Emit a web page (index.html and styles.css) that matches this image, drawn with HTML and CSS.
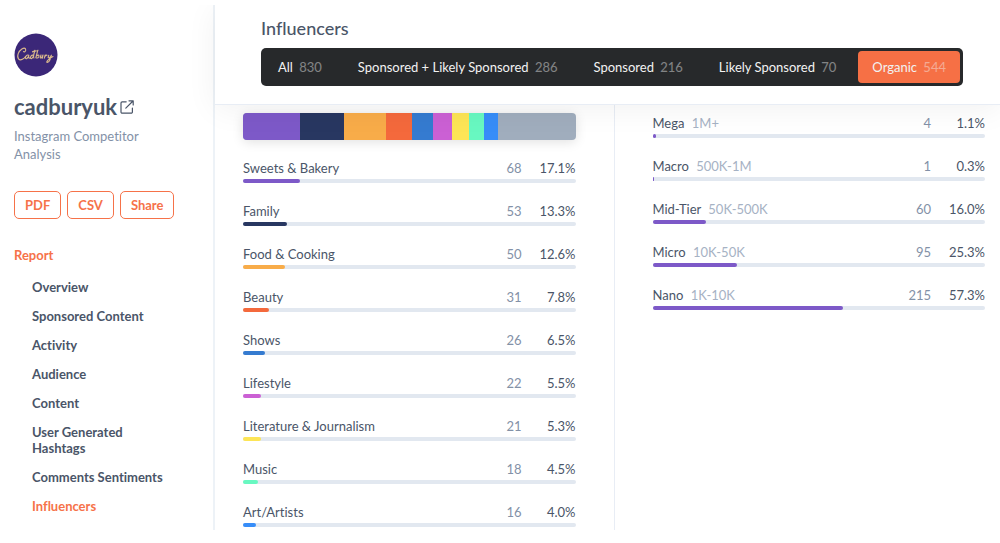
FILE: index.html
```html
<!DOCTYPE html>
<html lang="en">
<head>
<meta charset="utf-8">
<meta name="viewport" content="width=device-width, initial-scale=1">
<title>cadburyuk – Influencers</title>
<link rel="stylesheet" href="styles.css">
</head>
<body>
<div class="app">
  <aside class="sidebar">
    <svg class="avatar" viewBox="0 0 44 44" role="img" aria-label="Cadbury">
      <circle cx="22" cy="22" r="21.5" fill="#3b2778"/>
      <g fill="none" stroke="#d9b88c" stroke-width="1.1" stroke-linecap="round" stroke-linejoin="round">
        <path d="M9.500 18.500c.8 1.200 3-.8 2-2.600-1.300-2-6 .8-7.300 4.800-1.600 4.700 1 7.300 4.200 5.600 1.400-.7 2.400-1.600 3.200-2.800"/>
        <path d="M14.800 22.200c-2-1-3.800 1.500-3.300 3 .6 1.400 2.700-.4 3.300-2.600-.4 1.700-.3 3.300 1.500 2.200"/>
        <path d="M19.500 22.300c-2-.9-3.400 1.500-2.900 2.900.7 1.400 2.500-.6 3-2.600l1.300-5.400c-.8 3-2 6.500-1 7.800"/>
        <path d="M18.500 18.800c1.500-1.200 3.500-.2 5.500-1.400M23.800 17.400l-2 7.300c1.700 1 3.300-.4 3.200-1.800-.1-1-1.400-1-2.300 0"/>
        <path d="M27 22l-.8 2.700c.7 1.100 2-.6 2.800-2.700l-.6 3.200"/>
        <path d="M31.200 22l-.9 3.200c.3-1.600 1.500-3.200 2.800-3"/>
        <path d="M34.800 22.200l-.7 2.200c.7 1.200 2.400-.5 3.300-2.200-.6 3-2 7-4 7.200-1.900 0 .8-3.200 5.600-5.800"/>
      </g>
    </svg>
    <h1 class="account">
      <a class="account-link" href="#profile">cadburyuk
        <svg class="external" viewBox="0 0 14 14" aria-hidden="true" fill="none" stroke="currentColor" stroke-width="1.200" stroke-linecap="round" stroke-linejoin="round">
          <path d="M6.200 1.800H2.200a1.200 1.200 0 0 0-1.200 1.200v9a1.200 1.200 0 0 0 1.200 1.200h9a1.200 1.200 0 0 0 1.200-1.200V8M9 .8h4.200V5M13 1L5.800 8.200"/>
        </svg>
      </a>
    </h1>
    <p class="subtitle">Instagram Competitor Analysis</p>
    <div class="actions">
      <button class="action" type="button">PDF</button>
      <button class="action" type="button">CSV</button>
      <button class="action" type="button">Share</button>
    </div>
    <nav class="nav" aria-label="Report">
      <a class="nav-title" href="#report">Report</a>
      <ul class="nav-list">
        <li><a href="#overview">Overview</a></li>
        <li><a href="#sponsored">Sponsored Content</a></li>
        <li><a href="#activity">Activity</a></li>
        <li><a href="#audience">Audience</a></li>
        <li><a href="#content">Content</a></li>
        <li><a href="#hashtags">User Generated Hashtags</a></li>
        <li><a href="#sentiments">Comments Sentiments</a></li>
        <li><a class="current" href="#influencers">Influencers</a></li>
      </ul>
    </nav>
  </aside>

  <main class="main">
    <header class="header">
      <h2 class="title">Influencers</h2>
      <div class="tabs">
        <button class="tab" type="button">All <span class="tab-count">830</span></button>
        <button class="tab" type="button">Sponsored + Likely Sponsored <span class="tab-count">286</span></button>
        <button class="tab" type="button">Sponsored <span class="tab-count">216</span></button>
        <button class="tab" type="button">Likely Sponsored <span class="tab-count">70</span></button>
        <button class="tab active" type="button" aria-pressed="true">Organic <span class="tab-count">544</span></button>
      </div>
    </header>

    <div class="panels">
      <section class="panel" aria-label="Categories">
        <div class="stack">
          <span class="purple" style="width:17.1%"></span>
          <span class="navy" style="width:13.3%"></span>
          <span class="amber" style="width:12.6%"></span>
          <span class="orange" style="width:7.8%"></span>
          <span class="blue" style="width:6.5%"></span>
          <span class="pink" style="width:5.5%"></span>
          <span class="yellow" style="width:5.3%"></span>
          <span class="mint" style="width:4.5%"></span>
          <span class="sky" style="width:4%"></span>
        </div>
        <ul class="rows">
          <li class="row"><span class="name">Sweets &amp; Bakery</span><span class="count">68</span><span class="share">17.1%</span><div class="track"><div class="fill purple" style="width:17.1%"></div></div></li>
          <li class="row"><span class="name">Family</span><span class="count">53</span><span class="share">13.3%</span><div class="track"><div class="fill navy" style="width:13.3%"></div></div></li>
          <li class="row"><span class="name">Food &amp; Cooking</span><span class="count">50</span><span class="share">12.6%</span><div class="track"><div class="fill amber" style="width:12.6%"></div></div></li>
          <li class="row"><span class="name">Beauty</span><span class="count">31</span><span class="share">7.8%</span><div class="track"><div class="fill orange" style="width:7.8%"></div></div></li>
          <li class="row"><span class="name">Shows</span><span class="count">26</span><span class="share">6.5%</span><div class="track"><div class="fill blue" style="width:6.5%"></div></div></li>
          <li class="row"><span class="name">Lifestyle</span><span class="count">22</span><span class="share">5.5%</span><div class="track"><div class="fill pink" style="width:5.5%"></div></div></li>
          <li class="row"><span class="name">Literature &amp; Journalism</span><span class="count">21</span><span class="share">5.3%</span><div class="track"><div class="fill yellow" style="width:5.3%"></div></div></li>
          <li class="row"><span class="name">Music</span><span class="count">18</span><span class="share">4.5%</span><div class="track"><div class="fill mint" style="width:4.5%"></div></div></li>
          <li class="row"><span class="name">Art/Artists</span><span class="count">16</span><span class="share">4.0%</span><div class="track"><div class="fill sky" style="width:4%"></div></div></li>
        </ul>
      </section>

      <section class="panel" aria-label="Audience size">
        <ul class="rows">
          <li class="row"><span class="name">Mega <span class="range">1M+</span></span><span class="count">4</span><span class="share">1.1%</span><div class="track"><div class="fill purple" style="width:1.1%"></div></div></li>
          <li class="row"><span class="name">Macro <span class="range">500K-1M</span></span><span class="count">1</span><span class="share">0.3%</span><div class="track"><div class="fill purple" style="width:0.3%"></div></div></li>
          <li class="row"><span class="name">Mid-Tier <span class="range">50K-500K</span></span><span class="count">60</span><span class="share">16.0%</span><div class="track"><div class="fill purple" style="width:16%"></div></div></li>
          <li class="row"><span class="name">Micro <span class="range">10K-50K</span></span><span class="count">95</span><span class="share">25.3%</span><div class="track"><div class="fill purple" style="width:25.3%"></div></div></li>
          <li class="row"><span class="name">Nano <span class="range">1K-10K</span></span><span class="count">215</span><span class="share">57.3%</span><div class="track"><div class="fill purple" style="width:57.3%"></div></div></li>
        </ul>
      </section>
    </div>
  </main>
</div>
</body>
</html>
```
FILE: styles.css
```css
* {
  box-sizing: border-box;
}

body {
  margin: 0;
  padding: 5px 0 13px;
  background: #fff;
  color: #4a5568;
  font: 13px/20px Lato, "Open Sans", sans-serif;
  font-variant-ligatures: none;
}

ul {
  margin: 0;
  padding: 0;
  list-style: none;
}

a {
  color: inherit;
  text-decoration: none;
}

button {
  font: inherit;
  cursor: pointer;
}

.app {
  display: flex;
  min-height: calc(100vh - 18px);
}

/* Sidebar */
.sidebar {
  flex: none;
  width: 215px;
  padding: 28px 15px 0 14px;
  border-right: 2px solid #edf2f7;
}

.avatar {
  display: block;
  width: 44px;
  height: 44px;
}

.account {
  margin: 16px 0 0;
  font-size: 22px;
  line-height: 28px;
}

.account-link {
  display: flex;
  align-items: center;
  gap: 3px;
}

.external {
  width: 14px;
  height: 14px;
}

.subtitle {
  max-width: 150px;
  margin: 6px 0 0;
  color: #8391a7;
  line-height: 18px;
}

.actions {
  display: flex;
  gap: 6px;
  margin-top: 28px;
}

.action {
  height: 28px;
  padding: 0 10px;
  border: 1px solid #f67249;
  border-radius: 5px;
  background: #fff;
  color: #f67249;
  font-weight: 700;
}

.nav {
  margin-top: 26px;
  font-weight: 700;
}

.nav-title {
  display: block;
  color: #f67249;
}

.nav-list {
  display: grid;
  gap: 13px;
  margin-top: 14px;
  padding: 0 10px 0 18px;
  line-height: 16px;
}

.nav-list a {
  display: block;
}

.nav-list li {
  max-width: 132px;
}

.nav-list .current {
  color: #f67249;
}

/* Header */
.main {
  flex: 1;
  min-width: 0;
}

.header {
  padding: 10px 37px 18px 46px;
  border-bottom: 1px solid #e8edf5;
  box-shadow: 0 4px 30px rgba(0, 0, 0, 0.06);
  clip-path: inset(0 -40px -40px -40px);
}

.title {
  margin: 0;
  font-size: 18px;
  font-weight: 500;
  line-height: 26px;
}

.tabs {
  display: flex;
  justify-content: space-between;
  margin-top: 7px;
  padding: 3px;
  border-radius: 5px;
  background: #27292b;
}

.tab {
  height: 32px;
  padding: 0 14px;
  border: 0;
  border-radius: 4px;
  background: none;
  color: #f2f2f2;
  white-space: nowrap;
}

.tab-count {
  margin-left: 3px;
  opacity: 0.45;
}

.tab.active {
  background: #f67045;
}

/* Panels */
.panels {
  display: flex;
  padding: 0 15px 0 28px;
}

.panel {
  flex: 1 1 0;
  box-sizing: content-box;
  min-height: 417px;
  padding-top: 8px;
}

.panel:first-child {
  padding-right: 38px;
}

.panel:last-child {
  padding-left: 38px;
  border-left: 1px solid #e8edf5;
}

.stack {
  display: flex;
  height: 27px;
  margin-bottom: 18px;
  border-radius: 4px;
  overflow: hidden;
  background: #a0adbd;
  box-shadow: 0 2px 12px rgba(0, 0, 0, 0.12);
}

.rows {
  display: grid;
  gap: 18px;
}

.row {
  display: grid;
  grid-template-columns: 1fr auto 54px;
  row-gap: 1px;
}

.count {
  color: #8391a7;
}

.share {
  text-align: right;
}

.range {
  margin-left: 4px;
  color: #a6b2c4;
}

.track {
  grid-column: 1 / -1;
  height: 4px;
  border-radius: 2px;
  background: #e2e8f0;
}

.fill {
  height: 100%;
  border-radius: 2px;
}

.purple { background: #7d59c8; }
.navy { background: #283761; }
.amber { background: #f8ac49; }
.orange { background: #f4693c; }
.blue { background: #357bd0; }
.pink { background: #cb60d4; }
.yellow { background: #fde556; }
.mint { background: #68f8c1; }
.sky { background: #378df8; }
```
